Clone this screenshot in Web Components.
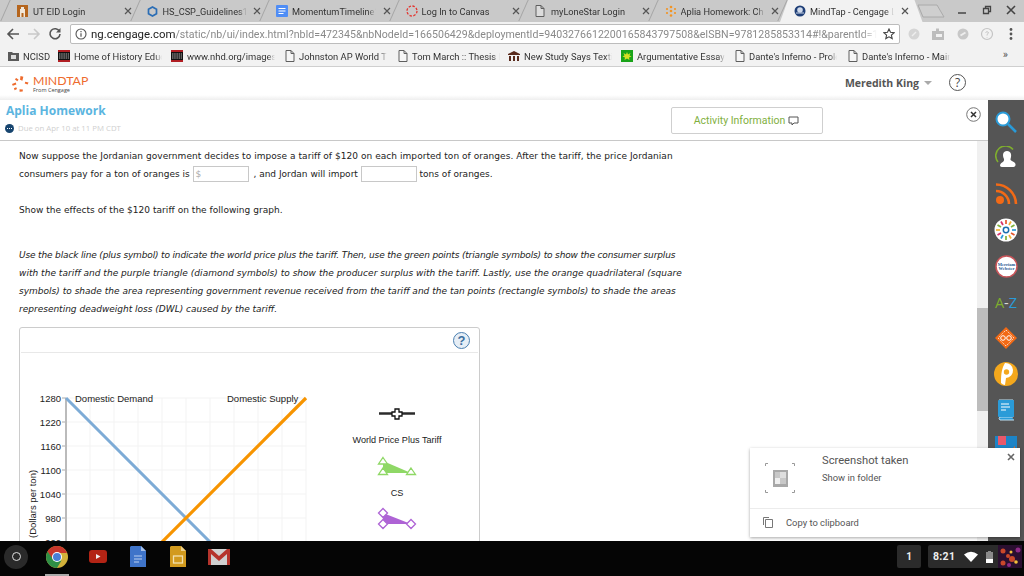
<!DOCTYPE html>
<html>
<head>
<meta charset="utf-8">
<title>MindTap</title>
<style>
  html, body { margin: 0; padding: 0; background: #fff; width: 1024px; height: 576px; overflow: hidden; }
  body { display: flex; flex-direction: column; font-family: Roboto, sans-serif; }
</style>
</head>
<body>
<browser-tabs>
  <browser-tab label="UT EID Login"><svg width="11" height="12" viewBox="0 0 11 12"><rect width="11" height="12" fill="#b5651d"/><path d="M3 12V4h1V2h3v2h1v8H6.500V8h-2v4z" fill="#f1e6d8"/></svg></browser-tab>
  <browser-tab label="HS_CSP_Guidelines1"><svg width="11" height="11" viewBox="0 0 11 11"><path d="M5.500 1l4 2.200v4.600l-4 2.200-4-2.200V3.200z" fill="none" stroke="#2a6db5" stroke-width="1.700"/></svg></browser-tab>
  <browser-tab label="MomentumTimeline1"><svg width="12" height="12" viewBox="0 0 12 12"><rect width="12" height="12" rx="1" fill="#4f8df5"/><path d="M2.500 3.500h7M2.500 6h7M2.500 8.500h5" stroke="#fff"/></svg></browser-tab>
  <browser-tab label="Log In to Canvas"><svg width="12" height="12" viewBox="0 0 12 12"><circle cx="6" cy="6" r="5" fill="none" stroke="#e3342f" stroke-width="1.300" stroke-dasharray="2.400 1.500"/></svg></browser-tab>
  <browser-tab label="myLoneStar Login"><page-icon></page-icon></browser-tab>
  <browser-tab label="Aplia Homework: Ch"><svg width="12" height="12" viewBox="0 0 12 12" fill="#f29423"><circle cx="6" cy="2" r="1.300"/><circle cx="2" cy="4" r="1.100"/><circle cx="10" cy="4" r="1.100"/><circle cx="6" cy="6" r="1.300"/><circle cx="2" cy="8" r="1.100"/><circle cx="10" cy="8" r="1.100"/><circle cx="6" cy="10.500" r="1.300"/></svg></browser-tab>
  <browser-tab active label="MindTap - Cengage L"><svg width="12" height="12" viewBox="0 0 12 12"><circle cx="6" cy="6" r="5.500" fill="#1f3f77"/><circle cx="6" cy="5" r="2.800" fill="#cfd9ea"/><path d="M2 8h8" stroke="#cfd9ea"/></svg></browser-tab>
</browser-tabs>
<browser-toolbar></browser-toolbar>
<bookmark-bar>
  <bookmark-item w="50" label="NCISD"><svg width="11" height="10" viewBox="0 0 11 10"><path d="M0 1h4l1 1h6v8H0z" fill="#5a5a5a"/><rect x="3" y="4" width="5" height="4" fill="#ddd"/></svg></bookmark-item>
  <bookmark-item w="113" label="Home of History Educ"><nhd-icon></nhd-icon></bookmark-item>
  <bookmark-item w="114" label="www.nhd.org/images"><nhd-icon></nhd-icon></bookmark-item>
  <bookmark-item w="113" label="Johnston AP World T"><page-icon></page-icon></bookmark-item>
  <bookmark-item w="110" label="Tom March :: Thesis E"><page-icon></page-icon></bookmark-item>
  <bookmark-item w="113" label="New Study Says Texti"><svg width="12" height="10" viewBox="0 0 12 10"><path d="M0 3l6-3 6 3v1H0zM1 5h2v5H1zM5 5h2v5H5zM9 5h2v5H9z" fill="#5a2b1d"/></svg></bookmark-item>
  <bookmark-item w="114" label="Argumentative Essay"><svg width="12" height="12" viewBox="0 0 12 12"><rect width="12" height="12" fill="#19a319"/><path d="M6 2l1 2.500L9.500 3 8.500 5.500 10.500 6.500 8 7.500 8.500 10 6 8.500 3.500 10 4 7.500 1.500 6.500 3.500 5.500 2.500 3 5 4.500z" fill="#d7df23"/></svg></bookmark-item>
  <bookmark-item w="113" label="Dante's Inferno - Prolo"><page-icon></page-icon></bookmark-item>
  <bookmark-item w="110" label="Dante's Inferno - Main"><page-icon></page-icon></bookmark-item>
</bookmark-bar>
<app-header></app-header>
<main-area>
  <activity-pane>
    <question-text>
      <p><span style="letter-spacing:.048px">Now suppose the Jordanian government decides to impose a tariff of $120 on each imported ton of oranges. After the tariff, the price Jordanian</span><br>consumers pay for a ton of oranges is <answer-box prefix="$" style="margin-right:2px"></answer-box> , and Jordan will import <answer-box></answer-box> tons of oranges.</p>
      <p><span style="letter-spacing:.03px">Show the effects of the $120 tariff on the following graph.</span></p>
      <p class="instr"><i><span style="letter-spacing:-.15px">Use the black line (plus symbol) to indicate the world price plus the tariff. Then, use the green points (triangle symbols) to show the consumer surplus</span><br><span style="letter-spacing:.027px">with the tariff and the purple triangle (diamond symbols) to show the producer surplus with the tariff. Lastly, use the orange quadrilateral (square</span><br><span style="letter-spacing:.014px">symbols) to shade the area representing government revenue received from the tariff and the tan points (rectangle symbols) to shade the areas</span><br>representing deadweight loss (DWL) caused by the tariff.</i></p>
    </question-text>
    <graph-card></graph-card>
  </activity-pane>
  <side-rail></side-rail>
  <screenshot-toast></screenshot-toast>
</main-area>
<os-shelf></os-shelf>

<script>
class PageIcon extends HTMLElement {
  constructor() {
    super();
    let shadowDom = this.attachShadow({ mode: "open" });
    shadowDom.innerHTML = `
      <style>:host { display: inline-flex; }</style>
      <svg width="10" height="12" viewBox="0 0 10 12"><path d="M1 .5h5l3 3v8H1zM6 .5v3h3" fill="#fff" fill-opacity=".35" stroke="#5f5f5f"/></svg>`;
  }
}
customElements.define("page-icon", PageIcon);

class NhdIcon extends HTMLElement {
  constructor() {
    super();
    let shadowDom = this.attachShadow({ mode: "open" });
    shadowDom.innerHTML = `
      <style>:host { display: inline-flex; }</style>
      <svg width="12" height="12" viewBox="0 0 12 12"><rect width="12" height="12" fill="#111"/><rect y="0" width="12" height="2" fill="#b01e23"/><rect y="10" width="12" height="2" fill="#b01e23"/><path d="M1 4h10M1 6h10M1 8h10" stroke="#ddd" stroke-width=".8" stroke-dasharray="1.500 .7"/></svg>`;
  }
}
customElements.define("nhd-icon", NhdIcon);

class BrowserTabs extends HTMLElement {
  constructor() {
    super();
    let shadowDom = this.attachShadow({ mode: "open" });
    shadowDom.innerHTML = `
      <style>
        :host { display: flex; height: 22px; background: #c9c9c9; padding-left: 8px; position: relative; flex: none; box-sizing: border-box; }
        .newtab { margin: 4px 0 0 2px; flex: none; }
        .win { margin-left: auto; display: flex; align-items: center; gap: 11px; padding: 0 7px 2px 0; }
      </style>
      <slot></slot>
      <svg class="newtab" width="28" height="14" viewBox="0 0 28 14"><path d="M1 1h19l7 12H6z" fill="#cfcfcf" stroke="#aaa"/></svg>
      <div class="win">
        <svg width="14" height="12" viewBox="0 0 14 12"><path d="M3 9h8" stroke="#444" stroke-width="1.500"/></svg>
        <svg width="14" height="12" viewBox="0 0 14 12"><path d="M3.500 4.500h5v5h-5zM5.500 4.500v-2h5v5h-2" fill="none" stroke="#444" stroke-width="1.300"/></svg>
        <svg width="12" height="12" viewBox="0 0 12 12"><path d="M2 2l8 8M10 2l-8 8" stroke="#444" stroke-width="1.600"/></svg>
      </div>`;
  }
}
customElements.define("browser-tabs", BrowserTabs);

class BrowserTab extends HTMLElement {
  constructor() {
    super();
    let shadowDom = this.attachShadow({ mode: "open" });
    shadowDom.innerHTML = `
      <style>
        :host { display: flex; align-items: center; width: 129.500px; flex: none; height: 22px; box-sizing: border-box; padding: 0 6px 0 9px; position: relative; font: 9.200px Roboto, sans-serif; color: #333; }
        :host::before { content: ""; position: absolute; left: -3px; top: 0; width: 1px; height: 21px; background: #a5a5a5; transform: skewX(-24deg); }
        :host([active])::after { content: ""; position: absolute; left: -5px; right: -8px; top: 0; bottom: 0; background: #f2f2f2; clip-path: polygon(8px 0, calc(100% - 8px) 0, 100% 100%, 0 100%); z-index: 0; }
        .fav, .label, .x { position: relative; z-index: 1; }
        .fav { width: 12px; display: flex; align-items: center; margin-right: 4px; flex: none; }
        .label { flex: none; width: 84px; overflow: hidden; white-space: nowrap; -webkit-mask-image: linear-gradient(90deg, #000 90%, transparent); mask-image: linear-gradient(90deg, #000 90%, transparent); }
        .x { margin-left: auto; width: 8px; height: 8px; margin-right: 0; }
      </style>
      <span class="fav"><slot></slot></span>
      <span class="label"></span>
      <svg class="x" viewBox="0 0 8 8"><path d="M1 1l6 6M7 1l-6 6" stroke="#555" stroke-width="1.200"/></svg>`;
    shadowDom.querySelector(".label").textContent = this.getAttribute("label");
  }
}
customElements.define("browser-tab", BrowserTab);

class BrowserToolbar extends HTMLElement {
  constructor() {
    super();
    let shadowDom = this.attachShadow({ mode: "open" });
    shadowDom.innerHTML = `
      <style>
        :host { display: flex; align-items: center; height: 23px; background: #f2f2f2; flex: none; padding-left: 6px; box-sizing: border-box; }
        .nav { display: flex; gap: 7px; width: 63px; flex: none; }
        .omni { width: 830px; height: 20px; flex: none; margin-left: 1px; box-sizing: border-box; border: 1px solid #bcbcbc; border-radius: 2px; background: #fff; display: flex; align-items: center; padding: 0 4px 0 4px; }
        .url { margin-left: 4px; width: 786px; overflow: hidden; white-space: nowrap; font: 10.600px Roboto, sans-serif; color: #8a8a8a; -webkit-mask-image: linear-gradient(90deg, #000 98%, transparent); mask-image: linear-gradient(90deg, #000 98%, transparent); }
        .url b { font-weight: 400; font-size: 11.400px; color: #222; }
        .star { margin-left: auto; flex: none; }
        .ext { display: flex; margin-left: 7px; gap: 10.300px; align-items: center; }
      </style>
      <div class="nav">
        <svg width="14" height="14" viewBox="0 0 14 14"><path d="M13 7H2M7 2L2 7l5 5" fill="none" stroke="#555" stroke-width="1.600"/></svg>
        <svg width="14" height="14" viewBox="0 0 14 14"><path d="M1 7h11M7 2l5 5-5 5" fill="none" stroke="#c9c9c9" stroke-width="1.600"/></svg>
        <svg width="14" height="14" viewBox="0 0 14 14"><path d="M11.500 4.500A5 5 0 1 0 12 7" fill="none" stroke="#555" stroke-width="1.600"/><path d="M12.500 1v4.500H8z" fill="#555"/></svg>
      </div>
      <div class="omni">
        <svg width="12" height="12" viewBox="0 0 12 12" style="flex:none"><circle cx="6" cy="6" r="5" fill="none" stroke="#555" stroke-width="1.100"/><path d="M6 5.300v3.500M6 3v1.200" stroke="#555" stroke-width="1.200"/></svg>
        <span class="url"><b>ng.cengage.com</b>/static/nb/ui/index.html?nbId=472345&amp;nbNodeId=166506429&amp;deploymentId=9403276612200165843797508&amp;eISBN=9781285853314#!&amp;parentId=16</span>
        <svg class="star" width="12" height="12" viewBox="0 0 12 12"><path d="M6 1l1.500 3.300 3.600.4-2.700 2.400.8 3.500L6 8.800l-3.200 1.800.8-3.500L.9 4.700l3.600-.4z" fill="none" stroke="#444" stroke-width="1.100"/></svg>
      </div>
      <div class="ext">
        <svg width="14" height="14" viewBox="0 0 14 14"><circle cx="7" cy="7" r="5.500" fill="#d5d5d5"/><path d="M5 9l4-4" stroke="#eee" stroke-width="1.500"/></svg>
        <svg width="14" height="14" viewBox="0 0 14 14"><path d="M1 4h4V1.500h3V4h5v9H1z" fill="#bdbdbd"/><rect x="5" y="7" width="6" height="3" fill="#f2f2f2"/></svg>
        <svg width="14" height="14" viewBox="0 0 14 14"><circle cx="7" cy="7" r="5.500" fill="#c8c8c8"/><path d="M4.500 8.500l5-3" stroke="#eee" stroke-width="2"/></svg>
        <svg width="14" height="14" viewBox="0 0 14 14"><circle cx="7" cy="7" r="5.500" fill="none" stroke="#c4c4c4" stroke-width="1.200"/><path d="M5.500 5.500Q7 3.800 8.500 5.500 8.500 6.500 7 7.500V8.500M7 10v.6" fill="none" stroke="#c4c4c4"/></svg>
        <svg width="14" height="14" viewBox="0 0 14 14" fill="#555"><circle cx="7" cy="2.500" r="1.400"/><circle cx="7" cy="7" r="1.400"/><circle cx="7" cy="11.500" r="1.400"/></svg>
      </div>`;
  }
}
customElements.define("browser-toolbar", BrowserToolbar);

class BookmarkBar extends HTMLElement {
  constructor() {
    super();
    let shadowDom = this.attachShadow({ mode: "open" });
    shadowDom.innerHTML = `
      <style>
        :host { display: flex; align-items: center; height: 22px; background: #f2f2f2; flex: none; padding: 1px 0 0 8px; box-sizing: border-box; position: relative; border-bottom: 1px solid #cfcfcf; }
        .more { position: absolute; right: 16px; top: 3px; font: 11px Roboto, sans-serif; color: #555; }
      </style>
      <slot></slot><span class="more">»</span>`;
  }
}
customElements.define("bookmark-bar", BookmarkBar);

class BookmarkItem extends HTMLElement {
  constructor() {
    super();
    let shadowDom = this.attachShadow({ mode: "open" });
    shadowDom.innerHTML = `
      <style>
        :host { display: flex; align-items: center; flex: none; box-sizing: border-box; font: 9.400px Roboto, sans-serif; color: #333; height: 20px; }
        .ic { display: flex; margin-right: 4px; flex: none; }
        .t { width: 88px; overflow: hidden; white-space: nowrap; -webkit-mask-image: linear-gradient(90deg, #000 92%, transparent); mask-image: linear-gradient(90deg, #000 92%, transparent); }
      </style>
      <span class="ic"><slot></slot></span><span class="t"></span>`;
    this.style.width = this.getAttribute("w") + "px";
    shadowDom.querySelector(".t").textContent = this.getAttribute("label");
  }
}
customElements.define("bookmark-item", BookmarkItem);

class AppHeader extends HTMLElement {
  constructor() {
    super();
    let shadowDom = this.attachShadow({ mode: "open" });
    shadowDom.innerHTML = `
      <style>
        :host { display: flex; align-items: center; height: 33px; flex: none; background: linear-gradient(#fff 85%, #eee); box-sizing: border-box; padding: 0 58px 2px 12px; font-family: "Open Sans", sans-serif; }
        .brand { display: flex; gap: 4px; align-items: center; margin-top: 3px; }
        .word { font: 400 12.300px/13px Lato, sans-serif; color: #ee6b2d; }
        .from { font: 5.500px/7px "Open Sans", sans-serif; color: #444; }
        .user { margin-left: auto; font-size: 10.500px; font-weight: 700; color: #555; display: flex; align-items: center; gap: 5px; }
        .caret { width: 0; height: 0; border: 4px solid transparent; border-top: 4px solid #aaa; border-bottom: 0; }
        .q { margin-left: 17px; width: 17px; height: 17px; box-sizing: border-box; border: 1px solid #555; border-radius: 50%; font: 12px/15px "Open Sans", sans-serif; color: #444; text-align: center; }
      </style>
      <div class="brand">
        <svg width="17" height="17" viewBox="0 0 18 18" fill="#ee6b2d"><path d="M9 0l3 .7-1 4.300-2.500-1zM14 6l3.500 1-1 2-3-1zM0 8.500L4 7l.6 2-3.800 1.400zM4.500 2l2.500 2-1.500 1.500L3 3.500zM2 13l2.500-1 .8 1.800L2.800 15zM8 14l3.500.2-.2 2.300-3.300.3z"/></svg>
        <div><div class="word">MINDTAP</div><div class="from">From Cengage</div></div>
      </div>
      <div class="user">Meredith King <span class="caret"></span></div>
      <div class="q">?</div>`;
  }
}
customElements.define("app-header", AppHeader);

class MainArea extends HTMLElement {
  constructor() {
    super();
    let shadowDom = this.attachShadow({ mode: "open" });
    shadowDom.innerHTML = `
      <style>:host { display: flex; flex: none; height: 441px; position: relative; overflow: hidden; }</style>
      <slot></slot>`;
  }
}
customElements.define("main-area", MainArea);

class ActivityPane extends HTMLElement {
  constructor() {
    super();
    let shadowDom = this.attachShadow({ mode: "open" });
    shadowDom.innerHTML = `
      <style>
        :host { display: flex; flex-direction: column; flex: none; width: 988px; position: relative; overflow: hidden; background: #fff; }
        .head { height: 41px; flex: none; box-sizing: border-box; border-bottom: 1px solid #c8c8c8; border-top: 0; padding-left: 6px; display: flex; position: relative; }
        .info { width: 665px; flex: none; }
        h1 { margin: 2px 0 0; font: 700 12px/17px "Open Sans", sans-serif; color: #5bb5e0; }
        .due { display: flex; align-items: center; gap: 4px; margin: 3px 0 0 0; font: 7.800px/12px "Open Sans", sans-serif; color: #cfcfcf; }
        .dot { flex: none; display: flex; margin-left: -1px; }
        .btn { margin: 7px 0 0 0; width: 152px; height: 27px; box-sizing: border-box; border: 1px solid #cfcfcf; border-radius: 2px; display: flex; align-items: center; justify-content: center; gap: 3px; font: 10.500px Roboto, sans-serif; color: #7fb03e; padding-right: 1px; }
        .close { margin: 7px 7px 0 143px; width: 15px; height: 15px; flex: none; }
        .body { flex: 1; display: flex; min-height: 0; }
        .content { flex: 1; min-width: 0; overflow: hidden; display: flex; flex-direction: column; }
        .bar { width: 11px; flex: none; background: #f0f0f0; display: flex; }
        .thumb { width: 11px; height: 103px; margin-top: 167px; background: #bdbdbd; }
      </style>
      <div class="head">
        <div class="info">
          <h1>Aplia Homework</h1>
          <div class="due"><svg class="dot" width="9" height="9" viewBox="0 0 9 9"><circle cx="4.500" cy="4.500" r="4.500" fill="#17456f"/><path d="M2 4.500h5" stroke="#fff" stroke-dasharray="1 1"/></svg>Due on Apr 10 at 11 PM CDT</div>
        </div>
        <div class="btn">Activity Information
          <svg width="11" height="10" viewBox="0 0 11 10"><path d="M1 1h9v6H6L4 9V7H1z" fill="none" stroke="#555"/></svg>
        </div>
        <svg class="close" viewBox="0 0 15 15"><circle cx="7.500" cy="7.500" r="6.800" fill="#fff" stroke="#777"/><path d="M5 5l5 5M10 5l-5 5" stroke="#333" stroke-width="1.500"/></svg>
      </div>
      <div class="body">
        <div class="content"><slot></slot></div>
        <div class="bar"><div class="thumb"></div></div>
      </div>`;
  }
}
customElements.define("activity-pane", ActivityPane);

class QuestionText extends HTMLElement {
  constructor() {
    super();
    let shadowDom = this.attachShadow({ mode: "open" });
    shadowDom.innerHTML = `
      <style>
        :host { display: block; flex: none; padding: 6px 0 0 19px; font: 9px/18px "DejaVu Sans", sans-serif; color: #222; white-space: nowrap; }
        ::slotted(p) { margin: 0 0 18px; }
        ::slotted(p.instr) { margin-top: 27px; margin-bottom: 9px; }
      </style>
      <slot></slot>`;
  }
}
customElements.define("question-text", QuestionText);

class AnswerBox extends HTMLElement {
  constructor() {
    super();
    let shadowDom = this.attachShadow({ mode: "open" });
    shadowDom.innerHTML = `
      <style>
        :host { display: inline-block; width: 56px; height: 16px; box-sizing: border-box; border: 1px solid #c8c8c8; vertical-align: middle; padding-left: 2px; font: 9px/14px "DejaVu Sans", sans-serif; color: #aaa; margin-top: -1px; }
      </style>
      <span></span>`;
    shadowDom.querySelector("span").textContent = this.getAttribute("prefix") || "";
  }
}
customElements.define("answer-box", AnswerBox);

class GraphCard extends HTMLElement {
  constructor() {
    super();
    let shadowDom = this.attachShadow({ mode: "open" });
    let grid = "";
    for (let x = 90; x <= 306; x += 24) {
      grid += `<path d="M${x} 398V560" stroke="#f3f3f3"/>`;
    }
    let labels = "";
    [1280, 1220, 1160, 1100, 1040, 980, 920].forEach((v, i) => {
      let y = 398 + i * 24;
      grid += `<path d="M66 ${y}H306" stroke="#f3f3f3"/><path d="M62 ${y}H66" stroke="#aaa"/>`;
      labels += `<text x="61" y="${y + 3.5}" text-anchor="end">${v}</text>`;
    });
    shadowDom.innerHTML = `
      <style>
        :host { display: block; flex: none; width: 461px; height: 400px; margin-left: 19px; box-sizing: border-box; border: 1px solid #ccc; border-radius: 3px; position: relative; }
        .top { height: 24px; margin: 0 1px; border-bottom: 1px solid #e8e8e8; position: relative; display: flex; justify-content: flex-end; align-items: center; padding-right: 8px; }
        .help { width: 17px; height: 17px; border-radius: 50%; box-sizing: border-box; border: 1px solid #4a7fb0; background: #e6eef6; color: #3d6f9f; font: 700 13px/15px "Liberation Sans", sans-serif; text-align: center; }
        svg { position: absolute; left: -20px; top: -328px; width: 490px; height: 700px; pointer-events: none; }
        text { font: 9.500px "Liberation Sans", sans-serif; fill: #222; }
        text.lg { font-size: 9.100px; }
      </style>
      <div class="top"><div class="help">?</div></div>
      <svg viewBox="0 0 490 700">
        ${grid}
        <path d="M66 398V560" stroke="#bbb" stroke-width="2"/>
        ${labels}
        <text x="75" y="402">Domestic Demand</text>
        <text x="227" y="402">Domestic Supply</text>
        <text transform="translate(36 538) rotate(-90)">(Dollars per ton)</text>
        <path d="M66 398L258 590" stroke="#7dabd6" stroke-width="3"/>
        <path d="M306 398L114 590" stroke="#f79400" stroke-width="3.200"/>
        <path d="M379 413.500H415" stroke="#2b2b2b" stroke-width="2.500"/>
        <path d="M395 409h4v3h3v4h-3v3h-4v-3h-3v-4h3z" fill="#fff" stroke="#111" stroke-width="1.300"/>
        <text class="lg" x="397" y="443" text-anchor="middle">World Price Plus Tariff</text>
        <path d="M383 461L383 473L411 473z" fill="#8fd866"/>
        <path d="M383 457.500l4.500 6.500h-9zM383 468l4.500 6.500h-9zM411 468l4.500 6.500h-9z" fill="#fff" stroke="#8fd866" stroke-width="1.300"/>
        <text class="lg" x="397" y="495.500" text-anchor="middle">CS</text>
        <path d="M383 513L383 524L411 524z" fill="#ae63d5"/>
        <path d="M383 508.500l4.500 4.500-4.500 4.500-4.500-4.500zM383 519.500l4.500 4.500-4.500 4.500-4.500-4.500zM411 519.500l4.500 4.500-4.500 4.500-4.500-4.500z" fill="#fff" stroke="#ae63d5" stroke-width="1.300"/>
      </svg>`;
  }
}
customElements.define("graph-card", GraphCard);

class SideRail extends HTMLElement {
  constructor() {
    super();
    let shadowDom = this.attachShadow({ mode: "open" });
    shadowDom.innerHTML = `
      <style>
        :host { display: flex; flex-direction: column; align-items: center; width: 36px; flex: none; background: #555; padding-top: 4px; box-sizing: border-box; overflow: hidden; }
        .c { height: 36px; flex: none; display: flex; align-items: center; justify-content: center; }
        .az { font: 400 14.500px "Open Sans", sans-serif; }
        .mw { font: 700 4.500px "Liberation Serif", serif; fill: #275a95; }
      </style>
      <div class="c"><svg width="24" height="24" viewBox="0 0 24 24"><circle cx="9" cy="9" r="6.500" fill="#fff" stroke="#2a9bd8" stroke-width="2"/><path d="M14 14l8 8" stroke="#2a9bd8" stroke-width="2.500"/></svg></div>
      <div class="c"><svg width="22" height="24" viewBox="0 0 22 24"><path d="M18 3.500A9 9 0 0 0 3 16" fill="none" stroke="#7fae2e" stroke-width="1.600"/><path d="M12 5c4 0 5 4 3.500 8-.6 2 4 2 5 5 .4 2-1 3-2 3H7c-2 0-2.500-2-1.500-3 1.500-2 4-2 3.500-5C7 9 8 5 12 5z" fill="#fff"/></svg></div>
      <div class="c"><svg width="24" height="24" viewBox="0 0 24 24"><circle cx="6" cy="18" r="4" fill="#f26a16"/><path d="M2 9a13 13 0 0 1 13 13M2 2.500a20 20 0 0 1 20 19.500" fill="none" stroke="#f26a16" stroke-width="2.600"/></svg></div>
      <div class="c"><svg width="24" height="24" viewBox="0 0 24 24"><circle cx="12" cy="12" r="11.500" fill="#fff"/><g stroke-width="1.700"><path d="M12 2v4" stroke="#e4572e"/><path d="M17 3.500l-2 3.500" stroke="#f2b134"/><path d="M20.500 7l-3.500 2" stroke="#7fb13b"/><path d="M22 12h-4" stroke="#2a9bd8"/><path d="M20.500 17l-3.500-2" stroke="#e4572e"/><path d="M17 20.500l-2-3.500" stroke="#f2b134"/><path d="M12 22v-4" stroke="#7fb13b"/><path d="M7 20.500l2-3.500" stroke="#2a9bd8"/><path d="M3.500 17l3.500-2" stroke="#d6336c"/><path d="M2 12h4" stroke="#f2b134"/><path d="M3.500 7l3.500 2" stroke="#7fb13b"/><path d="M7 3.500l2 3.500" stroke="#d6336c"/></g><circle cx="12" cy="12" r="2.700" fill="none" stroke="#1c6fb0" stroke-width="1.500"/></svg></div>
      <div class="c"><svg width="23" height="23" viewBox="0 0 23 23"><circle cx="11.500" cy="11.500" r="10.500" fill="#fff" stroke="#c9555a" stroke-width="1.500"/><text class="mw" x="11.500" y="10.500" text-anchor="middle">Merriam</text><text class="mw" x="11.500" y="15" text-anchor="middle">Webster</text></svg></div>
      <div class="c az"><span style="color:#7fae2e">A</span><span style="color:#ddd">-</span><span style="color:#2a9bd8">Z</span></div>
      <div class="c"><svg width="22" height="22" viewBox="0 0 22 22"><path d="M11 0l11 11-11 11L0 11z" fill="#f26a16"/><path d="M11 3l8 8-8 8-8-8z" fill="none" stroke="#fbd9c2" stroke-dasharray="1.500 1"/><circle cx="8" cy="11" r="2.300" fill="none" stroke="#fff"/><circle cx="14" cy="11" r="2.300" fill="none" stroke="#fff"/></svg></div>
      <div class="c"><svg width="24" height="24" viewBox="0 0 24 24"><circle cx="12" cy="12" r="12" fill="#f4a81d"/><path d="M11 1C8 6 7 11 7 21q2 2 4 2l1-7a6 6 0 1 0-1-15z" fill="#fff"/><circle cx="12.500" cy="10" r="2.700" fill="#f4a81d"/></svg></div>
      <div class="c"><svg width="18" height="22" viewBox="0 0 18 22"><path d="M2 1h14v17H3a2 2 0 0 0 0 3h14" fill="#2a9bd8" stroke="#bfe3f5"/><rect x="1" y="1" width="16" height="17" rx="1" fill="#2a9bd8"/><path d="M4 5h8M4 8h9M4 11h5" stroke="#fff"/></svg></div>
      <div class="c"><svg width="22" height="22" viewBox="0 0 22 22" style="margin-top:2px"><rect width="22" height="22" fill="#1d84c6"/><rect x="3" width="8" height="9" fill="#e8586a"/><path d="M13 18l7-8v10z" fill="#f26a16"/></svg></div>`;
  }
}
customElements.define("side-rail", SideRail);

class ScreenshotToast extends HTMLElement {
  constructor() {
    super();
    let shadowDom = this.attachShadow({ mode: "open" });
    shadowDom.innerHTML = `
      <style>
        :host { position: absolute; left: 750px; top: 348px; width: 270px; height: 89px; background: #fff; box-shadow: 0 1px 3px rgba(0,0,0,.35); display: flex; flex-direction: column; font: 9.400px Roboto, sans-serif; color: #555; z-index: 5; }
        .top { height: 60px; flex: none; display: flex; border-bottom: 1px solid #ececec; position: relative; box-sizing: content-box; }
        .thumb { width: 30px; height: 30px; margin: 15px 0 0 15px; flex: none; }
        .msg { margin: 7px 0 0 27px; }
        .ttl { font-size: 11.200px; line-height: 12px; color: #555; }
        .sub { line-height: 12px; margin-top: 5px; color: #555; }
        .x { position: absolute; right: 5px; top: 5px; }
        .copy { flex: 1; display: flex; align-items: center; padding: 0 0 2px 13px; gap: 13px; }
      </style>
      <div class="top">
        <svg class="thumb" viewBox="0 0 30 30"><path d="M.5 3V.5H3M27 .5h2.500V3M.5 27v2.500H3M27 29.500h2.500V27" fill="none" stroke="#999"/><rect x="8" y="7" width="15" height="17" fill="#a8a8a8"/><rect x="10" y="9" width="5" height="6" fill="#c8c8c8"/><rect x="15" y="9" width="6" height="6" fill="#dedede"/><rect x="10" y="15" width="5" height="6" fill="#efefef"/><rect x="15" y="15" width="6" height="6" fill="#c8c8c8"/></svg>
        <div class="msg"><div class="ttl">Screenshot taken</div><div class="sub">Show in folder</div></div>
        <svg class="x" width="8" height="8" viewBox="0 0 8 8"><path d="M1 1l6 6M7 1l-6 6" stroke="#666" stroke-width="1.600"/></svg>
      </div>
      <div class="copy">
        <svg width="10" height="11" viewBox="0 0 10 11"><path d="M.5 8V.5H6M2.500 2.500h7v8h-7z" fill="none" stroke="#777"/></svg>
        <span>Copy to clipboard</span>
      </div>`;
  }
}
customElements.define("screenshot-toast", ScreenshotToast);

class OsShelf extends HTMLElement {
  constructor() {
    super();
    let shadowDom = this.attachShadow({ mode: "open" });
    shadowDom.innerHTML = `
      <style>
        :host { display: flex; align-items: center; height: 35px; flex: none; background: #050505; padding: 0 2px 4px 4px; box-sizing: border-box; font: 700 10px Roboto, sans-serif; color: #eee; position: relative; }
        .apps { display: flex; align-items: center; }
        .launcher { width: 24px; height: 24px; border-radius: 50%; background: #2a2a2a; display: flex; align-items: center; justify-content: center; }
        .launcher i { width: 7px; height: 7px; border: 1.500px solid #ddd; border-radius: 50%; display: block; }
        .under { position: absolute; left: 45px; bottom: 0; width: 24px; height: 2px; background: #aaa; }
        .num { margin-left: auto; width: 24px; height: 23px; background: #2b2b2b; border-radius: 2px; display: flex; align-items: center; justify-content: center; }
        .tray { margin-left: 7px; width: 70px; height: 23px; background: #2b2b2b; display: flex; align-items: center; padding-left: 5px; box-sizing: border-box; gap: 8px; border-radius: 2px 0 0 2px; }
        .pic { width: 24px; height: 23px; flex: none; }
      </style>
      <div class="apps">
        <span class="launcher"><i></i></span>
        <svg width="22" height="22" viewBox="0 0 22 22" style="margin-left:18px"><circle cx="11" cy="11" r="11" fill="#d2b13a"/><path d="M11 0a11 11 0 0 0-9.500 5.500L6 13l5-6h10A11 11 0 0 0 11 0z" fill="#c9372c"/><path d="M1.500 5.500A11 11 0 0 0 11 22l4.500-7.500H8z" fill="#2f8f46"/><circle cx="11" cy="11" r="5" fill="#fff"/><circle cx="11" cy="11" r="4" fill="#4a7fd6"/></svg>
        <svg width="18" height="13" viewBox="0 0 18 13" style="margin-left:21px"><rect width="18" height="13" rx="3" fill="#b32415"/><path d="M7 4l4.500 2.500L7 9z" fill="#eee"/></svg>
        <svg width="16" height="21" viewBox="0 0 16 21" style="margin-left:23px"><path d="M1 0h10l5 5v16H0V1z" fill="#3f74c9"/><path d="M11 0l5 5h-5z" fill="#a5bfe8"/><path d="M4 10h8M4 13h8M4 16h5" stroke="#bcd0f0"/></svg>
        <svg width="16" height="21" viewBox="0 0 16 21" style="margin-left:24px"><path d="M1 0h10l5 5v16H0V1z" fill="#d29a1e"/><path d="M11 0l5 5h-5z" fill="#edd08a"/><rect x="3.500" y="10" width="9" height="7" fill="none" stroke="#f2e0b0" stroke-width="1.300"/></svg>
        <svg width="22" height="16" viewBox="0 0 22 16" style="margin-left:22px"><rect width="22" height="16" fill="#d0d0d0"/><path d="M0 0h3l8 7 8-7h3v16h-3V5l-8 7-8-7v11H0z" fill="#b5342c"/></svg>
      </div>
      <span class="under"></span>
      <div class="num">1</div>
      <div class="tray">
        <span style="font-size:10.500px;letter-spacing:.3px">8:21</span>
        <svg width="14" height="11" viewBox="0 0 14 11" style="margin-left:1px"><path d="M0 3.500Q7-2 14 3.500L7 11z" fill="#fff"/></svg>
        <svg width="7" height="12" viewBox="0 0 7 12"><path d="M2 0h3v1h2v11H0V1h2z" fill="#8a8a8a"/><rect y="8" width="7" height="4" fill="#fff"/></svg>
      </div>
      <svg class="pic" viewBox="0 0 24 23"><rect width="24" height="23" fill="#2a0f30"/><g fill="#c9482a"><circle cx="5" cy="6" r="2.500"/><circle cx="14" cy="14" r="3"/><circle cx="5" cy="18" r="2.500"/><circle cx="10" cy="11" r="2"/></g><g fill="#f3c03a"><circle cx="13" cy="7" r="1.500"/><circle cx="18" cy="17" r="1.800"/></g><g fill="#8f2a86"><circle cx="20" cy="5" r="2.500"/><circle cx="11" cy="20" r="2"/></g></svg>`;
  }
}
customElements.define("os-shelf", OsShelf);
</script>
</body>
</html>
